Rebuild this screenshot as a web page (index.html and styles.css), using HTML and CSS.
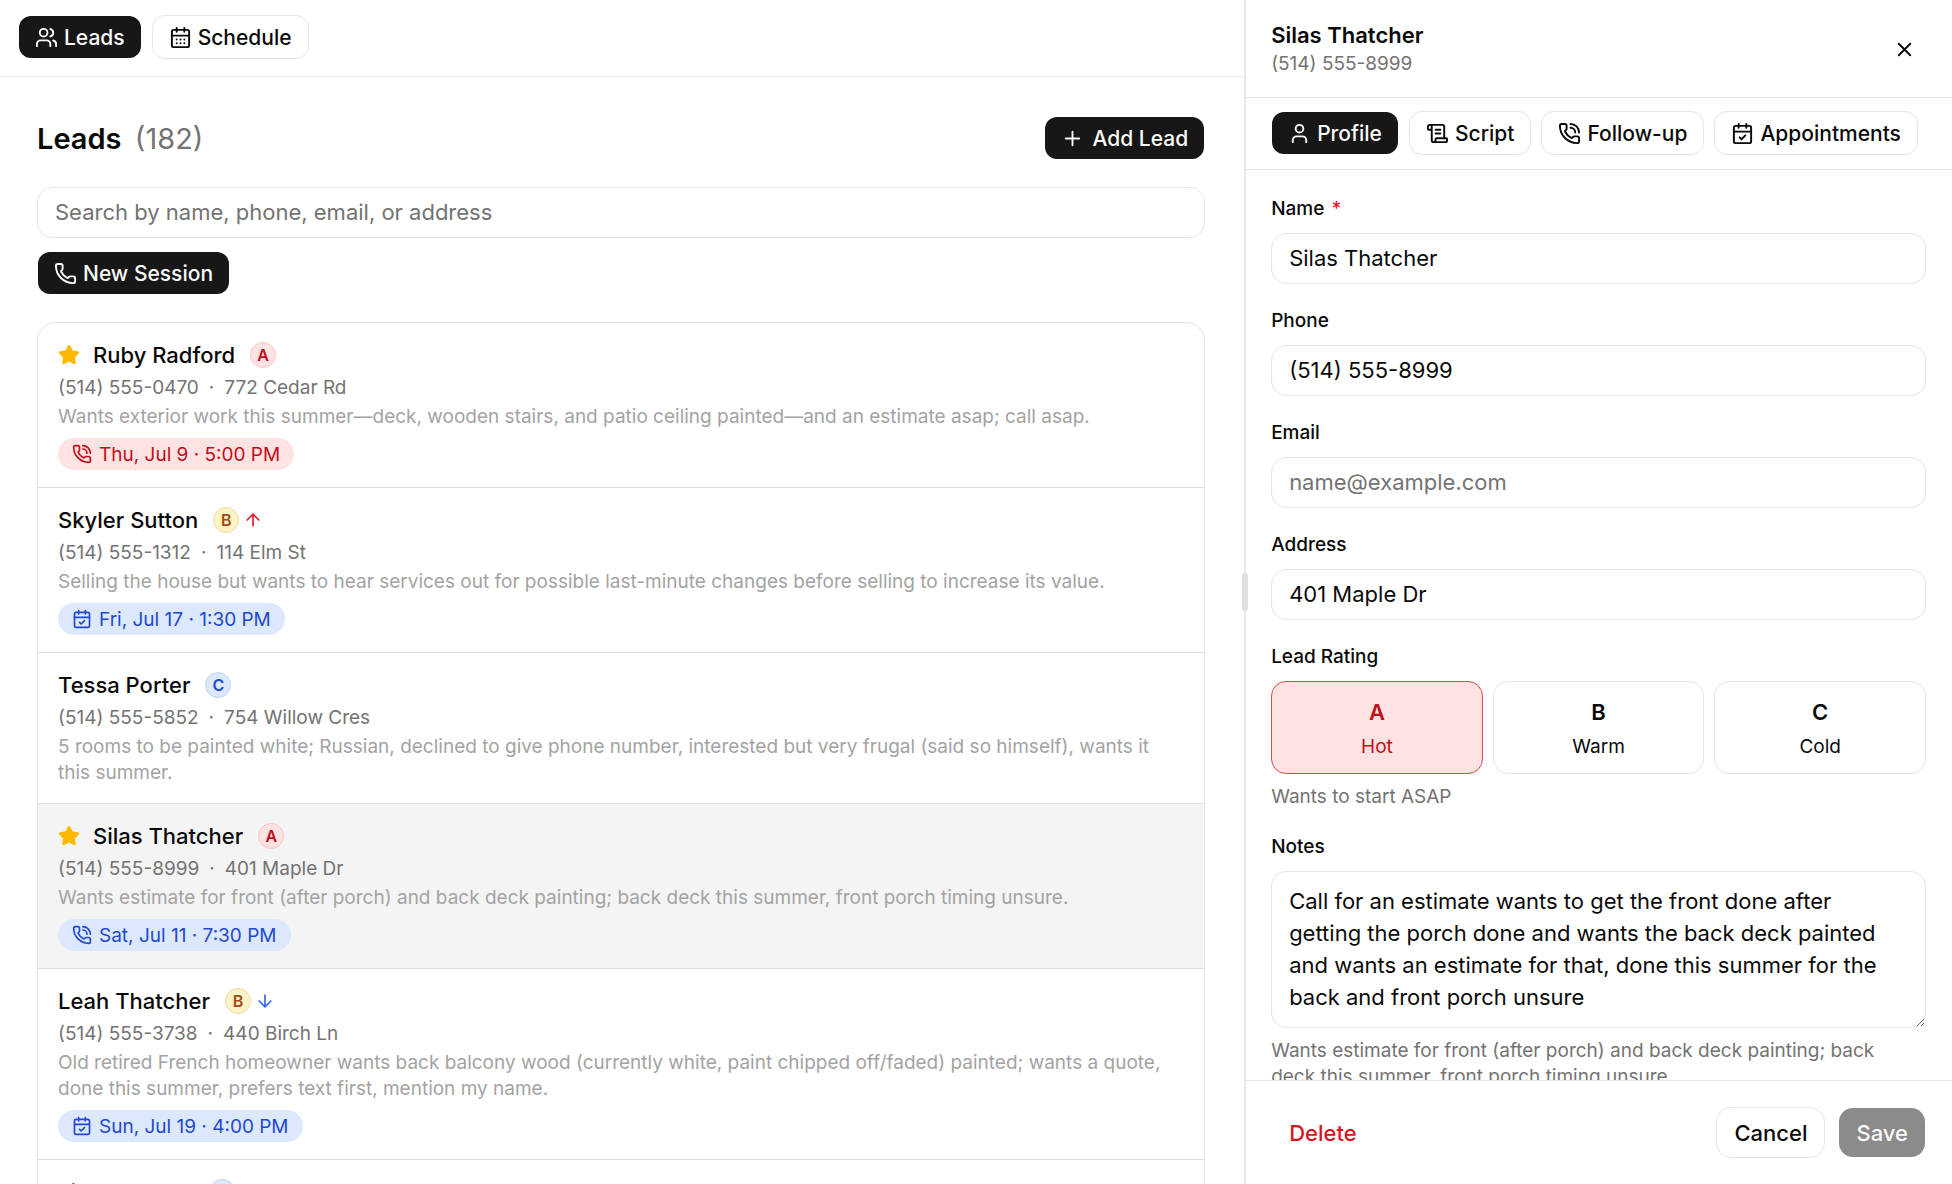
FILE: index.html
```html
<!DOCTYPE html>
<html lang="en">
<head>
    <meta charset="UTF-8">
    <meta name="viewport" content="width=device-width, initial-scale=1.0">
    <title>Leads</title>
    <link rel="stylesheet" href="styles.css">
</head>
<body>
    <svg class="sprite" aria-hidden="true">
        <symbol id="i-users" viewBox="0 0 24 24"><path d="M16 21v-2a4 4 0 0 0-4-4H6a4 4 0 0 0-4 4v2"/><path d="M16 3.128a4 4 0 0 1 0 7.744"/><path d="M22 21v-2a4 4 0 0 0-3-3.87"/><circle cx="9" cy="7" r="4"/></symbol>
        <symbol id="i-user" viewBox="0 0 24 24"><path d="M19 21v-2a4 4 0 0 0-4-4H9a4 4 0 0 0-4 4v2"/><circle cx="12" cy="7" r="4"/></symbol>
        <symbol id="i-days" viewBox="0 0 24 24"><path d="M8 2v4M16 2v4M3 10h18"/><rect x="3" y="4" width="18" height="18" rx="2"/><path d="M8 14h.01M12 14h.01M16 14h.01M8 18h.01M12 18h.01M16 18h.01"/></symbol>
        <symbol id="i-check" viewBox="0 0 24 24"><path d="M8 2v4M16 2v4M3 10h18"/><rect x="3" y="4" width="18" height="18" rx="2"/><path d="m9 16 2 2 4-4"/></symbol>
        <symbol id="i-plus" viewBox="0 0 24 24"><path d="M5 12h14M12 5v14"/></symbol>
        <symbol id="i-x" viewBox="0 0 24 24"><path d="M18 6 6 18M6 6l12 12"/></symbol>
        <symbol id="i-up" viewBox="0 0 24 24"><path d="m5 12 7-7 7 7M12 19V5"/></symbol>
        <symbol id="i-down" viewBox="0 0 24 24"><path d="M12 5v14M19 12l-7 7-7-7"/></symbol>
        <symbol id="i-phone" viewBox="0 0 24 24"><path d="M13.832 16.568a1 1 0 0 0 1.213-.303l.355-.465A2 2 0 0 1 17 15h3a2 2 0 0 1 2 2v3a2 2 0 0 1-2 2A18 18 0 0 1 2 4a2 2 0 0 1 2-2h3a2 2 0 0 1 2 2v3a2 2 0 0 1-.8 1.6l-.468.351a1 1 0 0 0-.292 1.233 14 14 0 0 0 6.392 6.384"/></symbol>
        <symbol id="i-call" viewBox="0 0 24 24"><path d="M13 2a9 9 0 0 1 9 9M13 6a5 5 0 0 1 5 5"/><path d="M13.832 16.568a1 1 0 0 0 1.213-.303l.355-.465A2 2 0 0 1 17 15h3a2 2 0 0 1 2 2v3a2 2 0 0 1-2 2A18 18 0 0 1 2 4a2 2 0 0 1 2-2h3a2 2 0 0 1 2 2v3a2 2 0 0 1-.8 1.6l-.468.351a1 1 0 0 0-.292 1.233 14 14 0 0 0 6.392 6.384"/></symbol>
        <symbol id="i-script" viewBox="0 0 24 24"><path d="M15 12h-5M15 8h-5M19 17V5a2 2 0 0 0-2-2H4"/><path d="M8 21h12a2 2 0 0 0 2-2v-1a1 1 0 0 0-1-1H11a1 1 0 0 0-1 1v1a2 2 0 1 1-4 0V5a2 2 0 1 0-4 0v2a1 1 0 0 0 1 1h3"/></symbol>
        <symbol id="i-star" viewBox="0 0 24 24"><path d="M11.525 2.295a.53.53 0 0 1 .95 0l2.31 4.679a2.123 2.123 0 0 0 1.595 1.16l5.166.756a.53.53 0 0 1 .294.904l-3.736 3.638a2.123 2.123 0 0 0-.611 1.878l.882 5.14a.53.53 0 0 1-.771.56l-4.618-2.428a2.122 2.122 0 0 0-1.973 0L6.396 21.01a.53.53 0 0 1-.77-.56l.881-5.139a2.122 2.122 0 0 0-.611-1.879L2.16 9.795a.53.53 0 0 1 .294-.906l5.165-.755a2.122 2.122 0 0 0 1.597-1.16z"/></symbol>
    </svg>

    <div class="app">
        <div class="main">
            <nav class="topbar">
                <button class="btn btn-dark"><svg class="icon"><use href="#i-users"/></svg>Leads</button>
                <button class="btn"><svg class="icon"><use href="#i-days"/></svg>Schedule</button>
            </nav>

            <main class="content">
                <div class="heading">
                    <h1>Leads <span>(182)</span></h1>
                    <button class="btn btn-dark btn-add"><svg class="icon"><use href="#i-plus"/></svg>Add Lead</button>
                </div>
                <input class="input search" type="search" aria-label="Search leads" placeholder="Search by name, phone, email, or address">
                <button class="btn btn-dark"><svg class="icon"><use href="#i-phone"/></svg>New Session</button>

                <ul class="list">
                    <li class="lead">
                        <div class="lead-name"><svg class="star"><use href="#i-star"/></svg><h2>Ruby Radford</h2><span class="badge badge-a">A</span></div>
                        <p class="contact"><span>(514) 555-0470</span><span>·</span><span>772 Cedar Rd</span></p>
                        <p class="summary">Wants exterior work this summer—deck, wooden stairs, and patio ceiling painted—and an estimate asap; call asap.</p>
                        <span class="pill pill-red"><svg class="icon"><use href="#i-call"/></svg>Thu, Jul 9 · 5:00 PM</span>
                    </li>
                    <li class="lead">
                        <div class="lead-name"><h2>Skyler Sutton</h2><span class="badge badge-b">B</span><svg class="trend trend-up"><use href="#i-up"/></svg></div>
                        <p class="contact"><span>(514) 555-1312</span><span>·</span><span>114 Elm St</span></p>
                        <p class="summary">Selling the house but wants to hear services out for possible last-minute changes before selling to increase its value.</p>
                        <span class="pill"><svg class="icon"><use href="#i-check"/></svg>Fri, Jul 17 · 1:30 PM</span>
                    </li>
                    <li class="lead">
                        <div class="lead-name"><h2>Tessa Porter</h2><span class="badge badge-c">C</span></div>
                        <p class="contact"><span>(514) 555-5852</span><span>·</span><span>754 Willow Cres</span></p>
                        <p class="summary">5 rooms to be painted white; Russian, declined to give phone number, interested but very frugal (said so himself), wants it this summer.</p>
                    </li>
                    <li class="lead lead-active">
                        <div class="lead-name"><svg class="star"><use href="#i-star"/></svg><h2>Silas Thatcher</h2><span class="badge badge-a">A</span></div>
                        <p class="contact"><span>(514) 555-8999</span><span>·</span><span>401 Maple Dr</span></p>
                        <p class="summary">Wants estimate for front (after porch) and back deck painting; back deck this summer, front porch timing unsure.</p>
                        <span class="pill"><svg class="icon"><use href="#i-call"/></svg>Sat, Jul 11 · 7:30 PM</span>
                    </li>
                    <li class="lead">
                        <div class="lead-name"><h2>Leah Thatcher</h2><span class="badge badge-b">B</span><svg class="trend trend-down"><use href="#i-down"/></svg></div>
                        <p class="contact"><span>(514) 555-3738</span><span>·</span><span>440 Birch Ln</span></p>
                        <p class="summary">Old retired French homeowner wants back balcony wood (currently white, paint chipped off/faded) painted; wants a quote, done this summer, prefers text first, mention my name.</p>
                        <span class="pill"><svg class="icon"><use href="#i-check"/></svg>Sun, Jul 19 · 4:00 PM</span>
                    </li>
                    <li class="lead">
                        <div class="lead-name"><h2>Linda Landry</h2><span class="badge badge-c">C</span></div>
                    </li>
                </ul>
            </main>
        </div>

        <aside class="panel">
            <div class="handle" role="separator" aria-orientation="vertical"></div>
            <header class="panel-header">
                <div>
                    <h2>Silas Thatcher</h2>
                    <p>(514) 555-8999</p>
                </div>
                <button class="close" aria-label="Close"><svg class="icon"><use href="#i-x"/></svg></button>
            </header>
            <nav class="tabs">
                <button class="btn btn-dark"><svg class="icon"><use href="#i-user"/></svg>Profile</button>
                <button class="btn"><svg class="icon"><use href="#i-script"/></svg>Script</button>
                <button class="btn"><svg class="icon"><use href="#i-call"/></svg>Follow-up</button>
                <button class="btn"><svg class="icon"><use href="#i-check"/></svg>Appointments</button>
            </nav>

            <form class="form" id="lead-form">
                <div class="field">
                    <label for="name">Name <span class="required">*</span></label>
                    <input class="input" id="name" type="text" value="Silas Thatcher">
                </div>
                <div class="field">
                    <label for="phone">Phone</label>
                    <input class="input" id="phone" type="tel" value="(514) 555-8999">
                </div>
                <div class="field">
                    <label for="email">Email</label>
                    <input class="input" id="email" type="email" placeholder="name@example.com">
                </div>
                <div class="field">
                    <label for="address">Address</label>
                    <input class="input" id="address" type="text" value="401 Maple Dr">
                </div>
                <div class="field" role="group" aria-labelledby="rating-label">
                    <span class="label" id="rating-label">Lead Rating</span>
                    <div class="ratings">
                        <button type="button" class="rating rating-active" aria-pressed="true"><b>A</b>Hot</button>
                        <button type="button" class="rating" aria-pressed="false"><b>B</b>Warm</button>
                        <button type="button" class="rating" aria-pressed="false"><b>C</b>Cold</button>
                    </div>
                    <p class="hint">Wants to start ASAP</p>
                </div>
                <div class="field">
                    <label for="notes">Notes</label>
                    <textarea class="input notes" id="notes" rows="4">Call for an estimate wants to get the front done after getting the porch done and wants the back deck painted and wants an estimate for that, done this summer for the back and front porch unsure</textarea>
                    <p class="hint">Wants estimate for front (after porch) and back deck painting; back deck this summer, front porch timing unsure.</p>
                </div>
            </form>

            <footer class="panel-footer">
                <button class="btn btn-lg btn-delete">Delete</button>
                <button class="btn btn-lg">Cancel</button>
                <button class="btn btn-lg btn-dark" form="lead-form" disabled>Save</button>
            </footer>
        </aside>
    </div>
</body>
</html>
```
FILE: styles.css
```css
* {
    box-sizing: border-box;
}

body {
    margin: 0;
    font-family: Inter, "Liberation Sans", sans-serif;
    font-size: 19px;
    color: #0a0a0a;
    background: #fff;
}

h1, h2, p, ul {
    margin: 0;
    padding: 0;
}

button, input, textarea {
    font-family: inherit;
    color: inherit;
}

.sprite {
    display: none;
}

.icon, .trend {
    width: 23px;
    height: 23px;
    flex: none;
    fill: none;
    stroke: currentColor;
    stroke-width: 2;
    stroke-linecap: round;
    stroke-linejoin: round;
}

.app {
    display: grid;
    grid-template-columns: minmax(0, 58fr) minmax(0, 33fr);
    height: 100vh;
}

/* Buttons and inputs */
.btn {
    display: inline-flex;
    align-items: center;
    gap: 6px;
    height: 44px;
    padding: 0 16px;
    font-size: 21px;
    font-weight: 500;
    white-space: nowrap;
    background: #fff;
    background-clip: padding-box;
    border: 1px solid #e5e5e5;
    border-radius: 13px;
    cursor: pointer;
}

.btn-dark {
    color: #fafafa;
    background-color: #171717;
    border-color: transparent;
}

.btn-add {
    gap: 9px;
}

.btn-lg {
    height: 51px;
    padding: 0 17px;
    font-size: 22px;
    border-radius: 15px;
}

.btn:disabled {
    background-color: #8b8b8b;
    cursor: default;
}

.input {
    display: block;
    width: 100%;
    height: 51px;
    padding: 0 17px 2px;
    font-size: 22px;
    background: #fff;
    border: 1px solid #e5e5e5;
    border-radius: 15px;
    outline: none;
}

.input::placeholder {
    color: #737373;
}

/* Left side */
.main {
    display: flex;
    flex-direction: column;
    min-height: 0;
    overflow: hidden;
}

.topbar {
    display: flex;
    gap: 10px;
    padding: 15px 18px 17px;
    border-bottom: 1px solid #e5e5e5;
}

.content {
    flex: 1;
    min-height: 0;
    padding: 39px 39px 0 37px;
    overflow: hidden;
}

.heading {
    display: flex;
    align-items: center;
    justify-content: space-between;
}

.heading h1 {
    font-size: 29px;
    font-weight: 600;
}

.heading span {
    margin-left: 6px;
    font-weight: 400;
    color: #737373;
}

.search {
    margin: 27px 0 13px;
}

.list {
    margin-top: 27px;
    list-style: none;
    border: 1px solid #e5e5e5;
    border-radius: 19px 19px 0 0;
}

.lead {
    padding: 18px 20px 17px;
    border-bottom: 1px solid #e0e0e0;
}

.lead-active {
    background: #f4f4f4;
}

.lead-name {
    display: flex;
    align-items: center;
    height: 28px;
}

.lead-name h2 {
    margin-right: 15px;
    font-size: 22px;
    font-weight: 500;
}

.star {
    width: 22px;
    height: 22px;
    margin-right: 13px;
    fill: #fdb900;
    stroke: #fdb900;
    stroke-width: 2;
}

.badge {
    display: flex;
    align-items: center;
    justify-content: center;
    width: 26px;
    height: 26px;
    font-size: 16px;
    font-weight: 600;
    border: 1px solid;
    border-radius: 50%;
}

.badge-a {
    color: #bf0f1b;
    background: #ffe2e2;
    border-color: #fcc5c8;
}

.badge-b {
    color: #a14a12;
    background: #fef3c6;
    border-color: #efd9a0;
}

.badge-c {
    color: #2348cf;
    background: #dbe8fe;
    border-color: #bdd4fa;
}

.trend {
    width: 20px;
    height: 20px;
    margin-left: 4px;
}

.trend-up {
    color: #e0202c;
}

.trend-down {
    color: #3068ee;
}

.contact {
    display: flex;
    gap: 10px;
    margin-top: 5px;
    line-height: 28px;
    color: #737373;
}

.summary {
    margin-top: 2px;
    line-height: 26px;
    color: #a3a3a3;
}

.pill {
    display: flex;
    align-items: center;
    gap: 7px;
    width: fit-content;
    height: 32px;
    margin-top: 8px;
    padding: 0 14px;
    color: #2348cf;
    background: #dbe8fe;
    border-radius: 16px;
}

.pill .icon {
    width: 20px;
    height: 20px;
}

.pill-red {
    color: #bf0f1b;
    background: #ffe2e2;
}

/* Lead panel */
.panel {
    position: relative;
    display: flex;
    flex-direction: column;
    min-height: 0;
    border-left: 2px solid #e8e8e8;
}

.handle {
    position: absolute;
    top: 50%;
    left: -4px;
    width: 6px;
    height: 38px;
    margin-top: -19px;
    background: #e0e0e0;
    border-radius: 3px;
}

.panel-header {
    display: flex;
    align-items: center;
    justify-content: space-between;
    padding: 20px 32px 19px 25px;
    border-bottom: 1px solid #e5e5e5;
}

.panel-header h2 {
    font-size: 22px;
    font-weight: 600;
    line-height: 30px;
}

.panel-header p {
    line-height: 28px;
    color: #737373;
}

.close {
    display: flex;
    padding: 4px;
    background: none;
    border: none;
    cursor: pointer;
}

.tabs {
    display: flex;
    gap: 10px;
    padding: 13px 25px 14px;
    border-bottom: 1px solid #e5e5e5;
}

.form {
    flex: 1;
    display: flex;
    flex-direction: column;
    gap: 24px;
    min-height: 0;
    padding: 26px 26px 0 25px;
    overflow: hidden;
}

.field label, .label {
    display: block;
    margin-bottom: 11px;
    font-weight: 500;
    line-height: 26px;
}

.required {
    margin-left: 2px;
    color: #dc1f2c;
}

.ratings {
    display: grid;
    grid-template-columns: repeat(3, 1fr);
    gap: 10px;
}

.rating {
    display: flex;
    flex-direction: column;
    align-items: center;
    justify-content: center;
    gap: 5px;
    height: 93px;
    padding: 4px 0 0;
    font-size: 19px;
    line-height: 30px;
    background: #fff;
    border: 1px solid #e5e5e5;
    border-radius: 15px;
    cursor: pointer;
}

.rating b {
    font-size: 22px;
    font-weight: 600;
}

.rating-active {
    color: #bf0f1b;
    background: #ffe2e2;
    border-color: #e2444e;
}

.hint {
    margin-top: 10px;
    padding-right: 10px;
    line-height: 26px;
    color: #737373;
}

.notes {
    height: auto;
    padding: 13px 17px 14px;
    line-height: 32px;
    resize: vertical;
}

.panel-footer {
    display: flex;
    gap: 13px;
    padding: 26px 26px 26px 25px;
    border-top: 1px solid #e5e5e5;
}

.btn-delete {
    margin-right: auto;
    color: #d9141f;
    border-color: transparent;
}
```
